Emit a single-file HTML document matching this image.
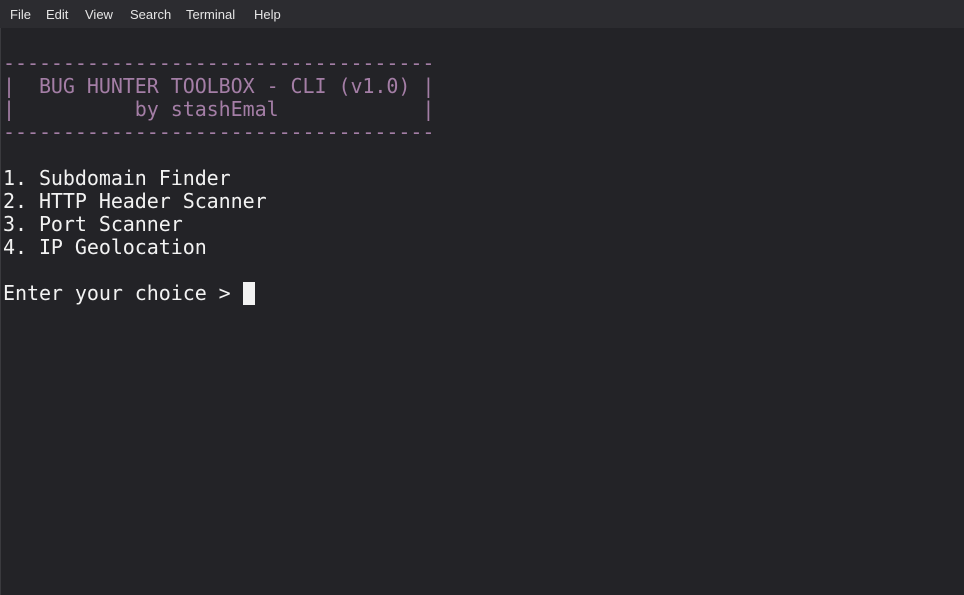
<!DOCTYPE html>
<html><head><style>
html,body{margin:0;padding:0;width:964px;height:595px;overflow:hidden;background:#232327;}
.menu{position:absolute;left:0;top:0;width:964px;height:28px;background:#2c2c30;font-family:"Liberation Sans","DejaVu Sans",sans-serif;font-size:13px;color:#e6e6e6;}
.menu span{position:absolute;top:7px;}
pre{position:absolute;left:3px;top:52px;margin:0;font-family:"DejaVu Sans Mono",monospace;font-size:20px;line-height:23px;letter-spacing:-0.06px;color:#f2f2f2;}
.p{color:#a47ea6;}
.cur{display:inline-block;width:12px;height:23px;background:#f2f2f2;vertical-align:top;}
.edge{position:absolute;left:0;top:28px;width:1px;height:567px;background:#3a3a3e;}
</style></head><body>
<div class="menu"><span style="left:10px">File</span><span style="left:46px">Edit</span><span style="left:85px">View</span><span style="left:130px">Search</span><span style="left:186px">Terminal</span><span style="left:254px">Help</span></div>
<div class="edge"></div>
<pre><span class="p">------------------------------------
|  BUG HUNTER TOOLBOX - CLI (v1.0) |
|          by stashEmal            |
------------------------------------</span>

1. Subdomain Finder
2. HTTP Header Scanner
3. Port Scanner
4. IP Geolocation

Enter your choice &gt; <span class="cur"></span></pre>
</body></html>
